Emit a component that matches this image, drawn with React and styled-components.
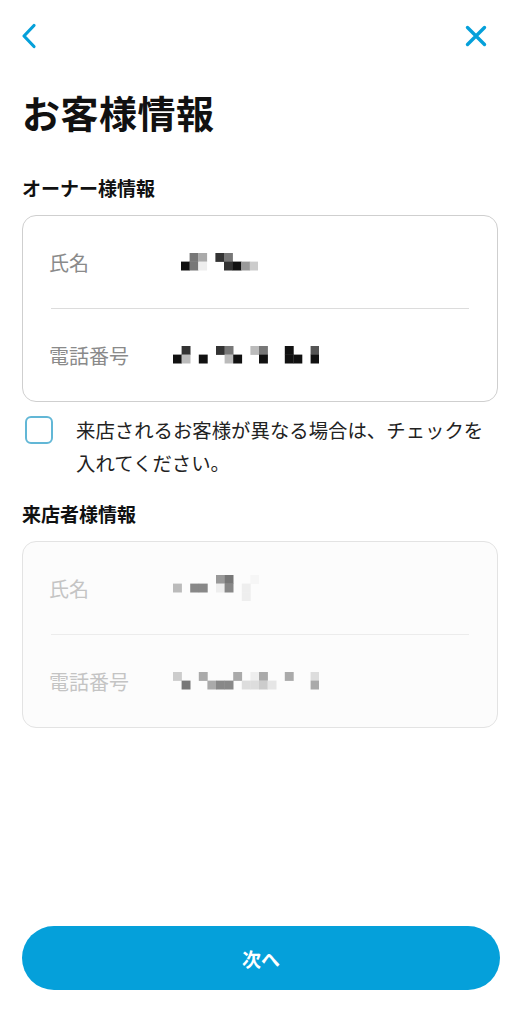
import React, { useState } from 'react';
import styled, { createGlobalStyle } from 'styled-components';

const GlobalStyle = createGlobalStyle`
  html, body {
    margin: 0;
    padding: 0;
    background: #ffffff;
  }
  body {
    font-family: "Noto Sans CJK JP", "Noto Sans", sans-serif;
    color: #111;
  }
`;

const BLUE = '#05a0da';

// pixel mosaics that hide the personal data: [x, y, shade]
const mosaics = {
  ownerName: [
    [1, 0, '#777'], [2, 0, '#aaa'], [4, 0, '#333'], [5, 0, '#777'],
    [0, 1, '#111'], [1, 1, '#777'], [2, 1, '#eee'], [5, 1, '#333'], [6, 1, '#111'], [7, 1, '#999'], [8, 1, '#ccc'],
  ],
  ownerPhone: [
    [1, 0, '#333'], [0, 1, '#111'], [1, 1, '#bbb'], [3, 1, '#111'],
    [5, 0, '#333'], [6, 0, '#777'], [6, 1, '#bbb'], [7, 1, '#111'],
    [9, 0, '#bbb'], [10, 0, '#777'], [10, 1, '#111'],
    [13, 0, '#111'], [13, 1, '#111'], [14, 1, '#111'],
    [16, 0, '#555'], [16, 1, '#111'],
  ],
  guestName: [
    [5, 0, '#999'], [6, 0, '#777'], [9, 0, '#f6f6f6'],
    [0, 1, '#bbb'], [2, 1, '#888'], [3, 1, '#888'], [5, 1, '#eee'], [6, 1, '#888'], [8, 1, '#eee'],
    [8, 2, '#eee'],
  ],
  guestPhone: [
    [0, 0, '#ccc'], [3, 0, '#aaa'], [7, 0, '#aaa'], [9, 0, '#eee'], [10, 0, '#aaa'], [13, 0, '#aaa'], [16, 0, '#ddd'],
    [1, 1, '#777'], [4, 1, '#aaa'], [5, 1, '#888'], [6, 1, '#888'], [8, 1, '#ddd'], [9, 1, '#ddd'],
    [10, 1, '#ccc'], [11, 1, '#e6e6e6'], [16, 1, '#aaa'],
  ],
};

const Mosaic = ({ cells }) => {
  const size = 8.6;
  const cols = Math.max(...cells.map((c) => c[0])) + 1;
  const rows = Math.max(...cells.map((c) => c[1])) + 1;
  return (
    <svg width={cols * size} height={rows * size}>
      {cells.map(([x, y, fill], i) => (
        <rect key={i} x={x * size} y={y * size} width={size + 0.3} height={size + 0.3} fill={fill} />
      ))}
    </svg>
  );
};

export default function App() {
  const [checked, setChecked] = useState(false);

  return (
    <>
      <GlobalStyle />
      <Page>
        <Header>
          <IconButton aria-label="戻る">
            <svg width="16" height="26" viewBox="0 0 16 26">
              <path d="M13 2.5 L3 13 L13 23.5" fill="none" stroke={BLUE} strokeWidth="3.2" strokeLinecap="round" strokeLinejoin="round" />
            </svg>
          </IconButton>
          <IconButton aria-label="閉じる">
            <svg width="22" height="22" viewBox="0 0 22 22">
              <path d="M2.5 2.5 L19.5 19.5 M19.5 2.5 L2.5 19.5" fill="none" stroke={BLUE} strokeWidth="3.4" strokeLinecap="round" />
            </svg>
          </IconButton>
        </Header>

        <Title>お客様情報</Title>

        <SectionTitle $top={36}>オーナー様情報</SectionTitle>
        <Card>
          <Row>
            <Label>氏名</Label>
            <Value $shift={8}><Mosaic cells={mosaics.ownerName} /></Value>
          </Row>
          <Divider />
          <Row>
            <Label>電話番号</Label>
            <Value><Mosaic cells={mosaics.ownerPhone} /></Value>
          </Row>
        </Card>

        <CheckRow onClick={() => setChecked(!checked)}>
          <Box $checked={checked} />
          <CheckText>来店されるお客様が異なる場合は、チェックを入れてください。</CheckText>
        </CheckRow>

        <SectionTitle $top={22}>来店者様情報</SectionTitle>
        <Card $disabled>
          <Row>
            <Label $disabled>氏名</Label>
            <Value><Mosaic cells={mosaics.guestName} /></Value>
          </Row>
          <Divider $disabled />
          <Row>
            <Label $disabled>電話番号</Label>
            <Value><Mosaic cells={mosaics.guestPhone} /></Value>
          </Row>
        </Card>

        <NextButton>次へ</NextButton>
      </Page>
    </>
  );
}

const Page = styled.div`
  width: 520px;
  min-height: 1024px;
  box-sizing: border-box;
  display: flex;
  flex-direction: column;
  padding: 0 22px 34px;
`;

const Header = styled.div`
  height: 72px;
  display: flex;
  align-items: center;
  justify-content: space-between;
`;

const IconButton = styled.button`
  border: none;
  background: none;
  padding: 0;
  display: flex;
  align-items: center;
  justify-content: center;
  cursor: pointer;
  &:first-child {
    margin-left: -1px;
  }
  &:last-child {
    margin-right: 11px;
  }
`;

const Title = styled.h1`
  margin: 13px 0 0;
  font-size: 38px;
  line-height: 54px;
  font-weight: 700;
  letter-spacing: 0.5px;
`;

const SectionTitle = styled.h2`
  margin: ${(p) => p.$top}px 0 14px;
  font-size: 19px;
  line-height: 26px;
  font-weight: 700;
`;

const Card = styled.div`
  border: 1.5px solid ${(p) => (p.$disabled ? '#e3e3e3' : '#cfcfcf')};
  background: ${(p) => (p.$disabled ? '#fcfcfc' : '#fff')};
  border-radius: 14px;
  padding: 0 28px 0 26px;
`;

const Row = styled.div`
  height: 92px;
  display: flex;
  align-items: center;
`;

const Label = styled.span`
  width: 124px;
  flex-shrink: 0;
  font-size: 20px;
  color: ${(p) => (p.$disabled ? '#c4c4c4' : '#8a8a8a')};
`;

const Value = styled.div`
  display: flex;
  align-items: center;
  margin-left: ${(p) => p.$shift ?? 0}px;
`;

const Divider = styled.div`
  height: 1px;
  margin-left: 2px;
  background: ${(p) => (p.$disabled ? '#ececec' : '#dcdcdc')};
`;

const CheckRow = styled.label`
  display: flex;
  align-items: flex-start;
  gap: 23px;
  margin-top: 13px;
  padding-left: 3px;
  cursor: pointer;
`;

const Box = styled.span`
  width: 28px;
  height: 28px;
  flex-shrink: 0;
  box-sizing: border-box;
  border: 2px solid #62b7d6;
  border-radius: 6px;
  background: ${(p) => (p.$checked ? BLUE : '#fff')};
  margin-top: 1px;
`;

const CheckText = styled.span`
  font-size: 19.4px;
  line-height: 33px;
  color: #222;
  margin-top: -2px;
`;

const NextButton = styled.button`
  margin-top: auto;
  height: 64px;
  width: 478px;
  border: none;
  border-radius: 32px;
  background: ${BLUE};
  color: #fff;
  font-family: "Noto Sans CJK JP", sans-serif;
  font-size: 19px;
  font-weight: 700;
  cursor: pointer;
`;
